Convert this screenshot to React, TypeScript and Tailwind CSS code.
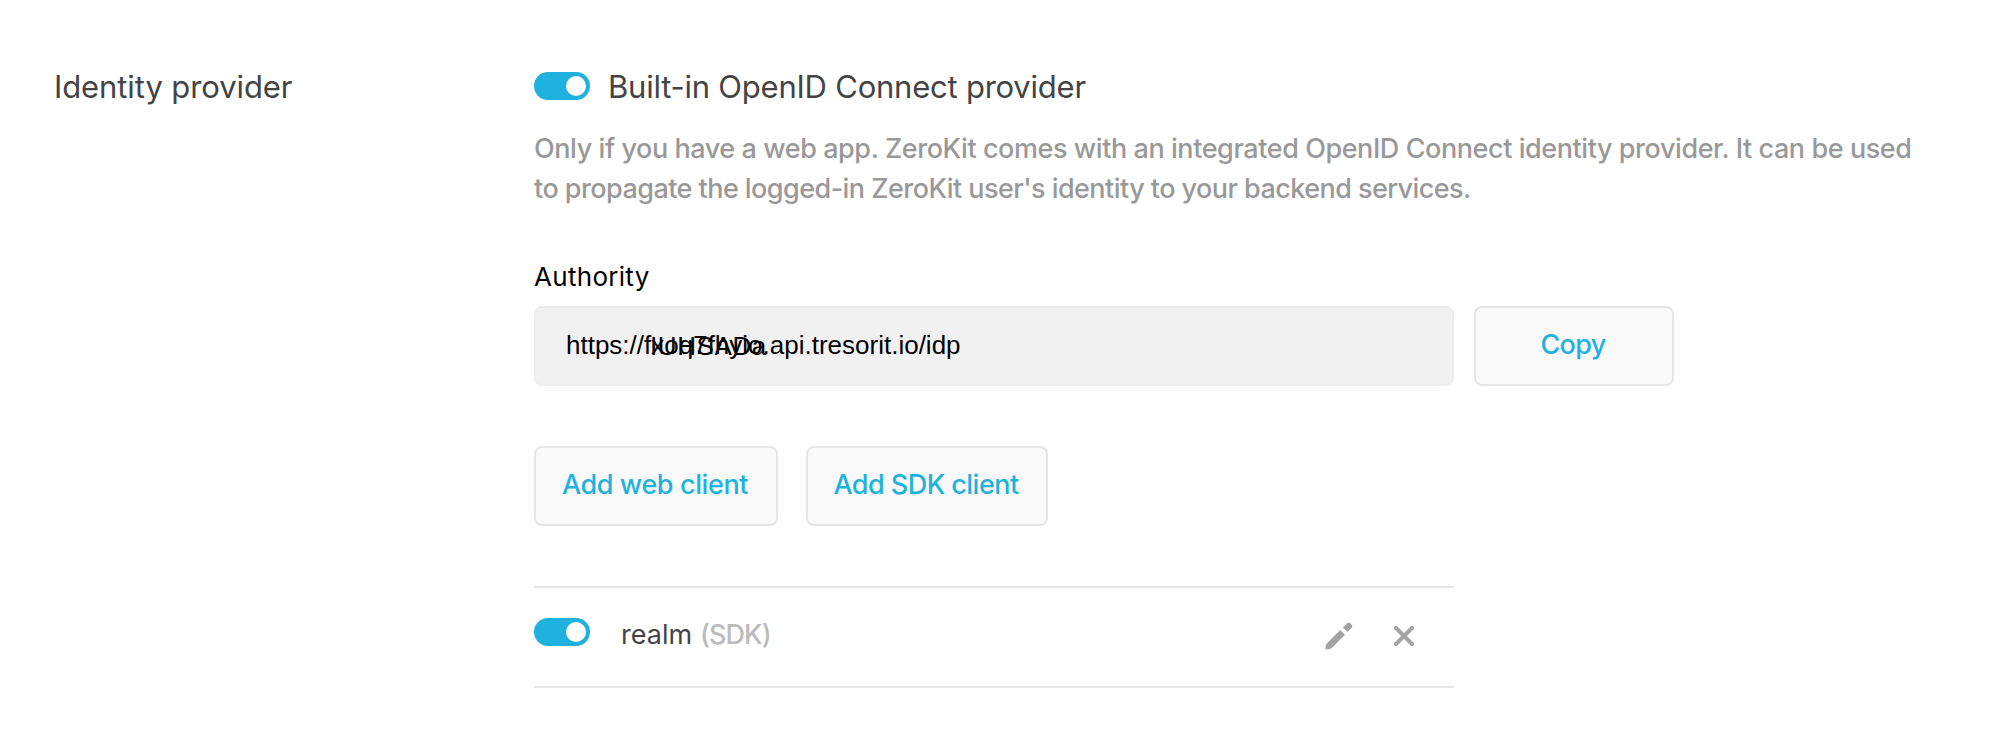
function Toggle() {
  return (
    <span className="flex h-7 w-14 shrink-0 items-center justify-end rounded-full bg-[#1fb2de] p-1">
      <span className="size-5 rounded-full bg-white" />
    </span>
  );
}

function PencilIcon() {
  return (
    <svg className="h-7 w-7" viewBox="0 0 28 28" fill="#a3a3a3">
      <path d="M15.2 8 L20 12.8 L7 25.8 Q5.8 26.9 4.4 27.1 L0.9 27.6 Q0.3 27.6 0.4 27.1 L0.9 23.5 Q1.1 22.1 2.2 21 Z" />
      <path d="M17.8 5.4 L21.8 1.4 Q23.6 -0.2 25.3 1.4 L26.5 2.6 Q28.1 4.4 26.5 6.1 L22.5 10.1 Z" />
    </svg>
  );
}

function CloseIcon() {
  return (
    <svg className="size-5" viewBox="0 0 20 20" fill="none" stroke="#a3a3a3" strokeWidth="4" strokeLinecap="round">
      <path d="M2 2 L18 18 M18 2 L2 18" />
    </svg>
  );
}

const button =
  "flex h-20 items-center justify-center rounded-lg border-2 border-[#e6e6e6] bg-[#fafafa] pb-0.5 text-[27px] leading-10 font-[450] text-[#1fb2de] whitespace-nowrap";

export default function App() {
  return (
    <main className="flex h-[732px] w-[1992px] bg-white pt-[67px] pl-[54px] font-['Inter',sans-serif] text-[#444]">
      <h2 className="w-[480px] shrink-0 text-[31px] leading-10 tracking-[-0.1px]">Identity provider</h2>

      <section className="w-[1400px]">
        <div className="flex items-start">
          <div className="pt-[5px]">
            <Toggle />
          </div>
          <h3 className="ml-[18px] text-[31px] leading-10 tracking-[-0.23px] whitespace-nowrap">
            Built-in OpenID Connect provider
          </h3>
        </div>

        <p className="mt-[22px] text-[27px] leading-10 font-[450] whitespace-nowrap text-[#999]">
          <span className="block tracking-[-0.43px]">
            Only if you have a web app. ZeroKit comes with an integrated OpenID Connect identity provider. It can be used
          </span>
          <span className="block tracking-[-0.55px]">
            to propagate the logged-in ZeroKit user's identity to your backend services.
          </span>
        </p>

        <div className="mt-[50px] text-[26px] leading-9 tracking-[0.3px] text-black">Authority</div>
        <div className="mt-[11px] flex gap-5">
          <div className="flex h-20 w-[920px] items-center rounded-lg border-2 border-[#ededed] bg-[#f1f1f1] px-[30px] pb-0.5 font-['Liberation_Sans',sans-serif] text-[26px] leading-8 text-black">
            <span className="relative">
              https://fxoq7fhyio.api.tresorit.io/idp
              <span className="absolute top-px left-[84px] tracking-[0.6px]">IUHSADa</span>
            </span>
          </div>
          <button className={`${button} w-[200px] pr-0.5 tracking-[-0.7px]`}>Copy</button>
        </div>

        <div className="mt-[60px] flex gap-7">
          <button className={`${button} w-[244px] pr-0.5 tracking-[-0.4px]`}>Add web client</button>
          <button className={`${button} w-[242px] pr-0.5 tracking-[-0.54px]`}>Add SDK client</button>
        </div>

        <div className="mt-[60px] flex h-[102px] w-[920px] items-start border-y-2 border-[#e6e6e6] pt-[26px] text-[27px] leading-10">
          <div className="pt-1">
            <Toggle />
          </div>
          <span className="ml-[31px] pt-px">realm</span>
          <span className="ml-2 pt-px font-[450] tracking-[-0.95px] text-[#bbb]">(SDK)</span>
          <div className="mr-10 ml-auto flex items-center gap-[41px] pt-[8px]">
            <PencilIcon />
            <CloseIcon />
          </div>
        </div>
      </section>
    </main>
  );
}
